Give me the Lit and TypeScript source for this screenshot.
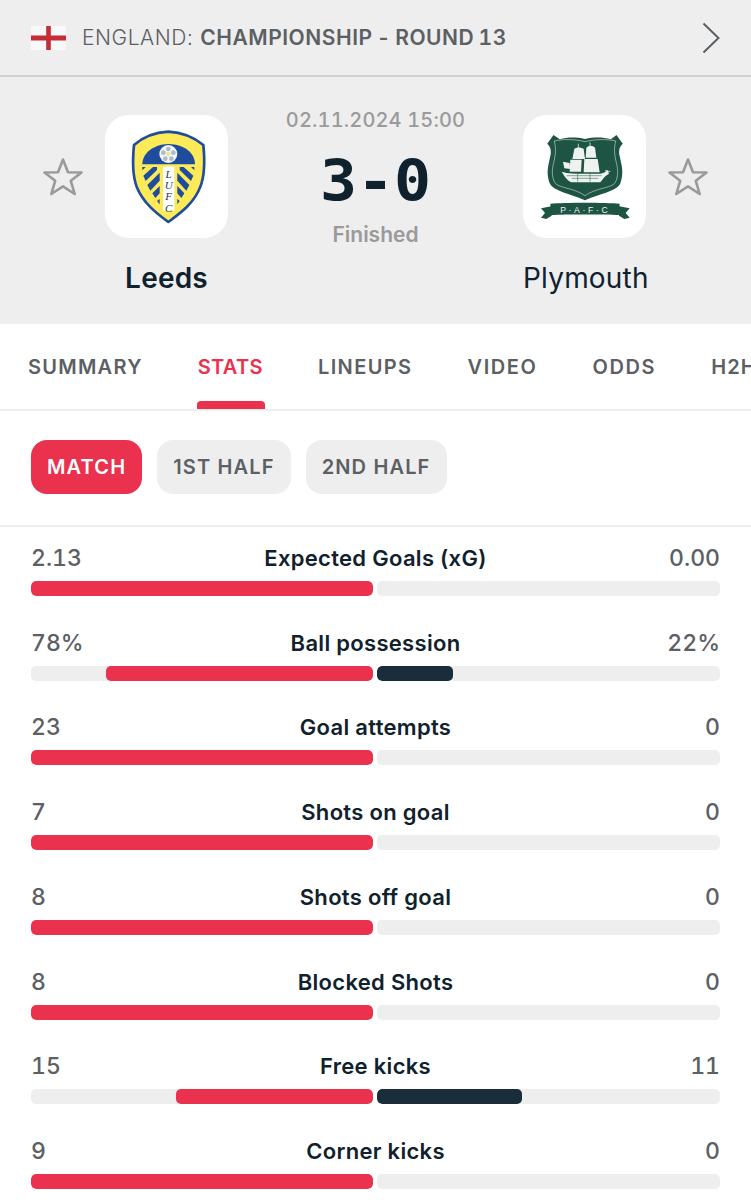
import { LitElement, html, css } from "lit";
import { customElement } from "lit/decorators.js";

const TABS: [string, number][] = [["SUMMARY", 1.25], ["STATS", 0.35], ["LINEUPS", 1.4], ["VIDEO", 1.6], ["ODDS", 1.6], ["H2H", 1.1]];
const PILLS = ["MATCH", "1ST HALF", "2ND HALF"];
type Stat = { l: string; h: string; a: string; hp: number; ap: number };
const STATS: Stat[] = [
  { l: "Expected Goals (xG)", h: "2.13", a: "0.00", hp: 100, ap: 0 },
  { l: "Ball possession", h: "78%", a: "22%", hp: 78, ap: 22 },
  { l: "Goal attempts", h: "23", a: "0", hp: 100, ap: 0 },
  { l: "Shots on goal", h: "7", a: "0", hp: 100, ap: 0 },
  { l: "Shots off goal", h: "8", a: "0", hp: 100, ap: 0 },
  { l: "Blocked Shots", h: "8", a: "0", hp: 100, ap: 0 },
  { l: "Free kicks", h: "15", a: "11", hp: 57.7, ap: 42.3 },
  { l: "Corner kicks", h: "9", a: "0", hp: 100, ap: 0 },
];

const star = html`<svg class="star" viewBox="0 0 40 40" aria-hidden="true">
  <polygon points="20,2.5 25,15.3 38.5,15.5 27.8,23.8 31.7,37 20,29.4 8.3,37 12.2,23.8 1.5,15.5 15,15.3" fill="none" stroke="#9a9a9a" stroke-width="2.6" stroke-linejoin="round"></polygon>
</svg>`;

const leeds = html`<svg class="crest" viewBox="-60 -30 369 369" aria-label="Leeds crest">
  <path d="M130 20C95 22 55 35 27 60C22 110 22 150 35 185C55 235 95 265 130 291C165 265 208 235 226 185C240 150 240 110 235 60C205 35 165 22 130 20Z" fill="#fcea58" stroke="#1f4c9c" stroke-width="8" stroke-linejoin="round"></path>
  <path d="M52 118C52 85 85 58 130 57C180 58 210 85 210 118Z" fill="#1f4c9c"></path>
  <circle cx="130" cy="87" r="27" fill="#f4f6fa"></circle>
  <g fill="#a9bcd6">
    <circle cx="130" cy="72" r="7"></circle><circle cx="145" cy="83" r="7"></circle><circle cx="139" cy="101" r="7"></circle><circle cx="121" cy="101" r="7"></circle><circle cx="115" cy="83" r="7"></circle>
  </g>
  <circle cx="130" cy="87" r="7" fill="#f3e68a"></circle>
  <rect x="114" y="125" width="34" height="132" fill="#fff"></rect>
  <text class="lufc" x="131" y="128">LUFC</text>
  <g fill="#1f4c9c">
    <path d="M55 152L84 126L96 126L96 135L62 168Z"></path>
    <path d="M67 180L104 143V167L76 197Z"></path>
    <path d="M82 205L104 183V205L91 219Z"></path>
    <path d="M205 152L176 126L164 126L164 135L198 168Z"></path>
    <path d="M193 180L157 143V167L184 197Z"></path>
    <path d="M178 205L157 183V205L169 219Z"></path>
    <path d="M96 228L104 222V238Z"></path>
    <path d="M164 228L157 222V238Z"></path>
    <path d="M52 126H62L52 136Z"></path>
    <path d="M208 126H198L208 136Z"></path>
  </g>
</svg>`;

const ply = html`<svg class="crest" viewBox="-36 -30 369 369" aria-label="Plymouth crest">
  <g transform="translate(150 0) scale(1.05 1) translate(-150 0)">
    <path d="M60 30L78 43C100 36 124 36 150 42C176 36 200 36 224 43L240 30L258 56C250 64 246 72 248 88C254 120 262 140 252 172C244 200 196 204 150 226C104 204 58 200 48 172C38 140 46 120 52 88C54 72 50 64 42 56Z" fill="#1d5443"></path>
    <path d="M62 48C85 42 120 42 150 50C180 42 215 42 238 48C232 70 234 90 240 115C246 140 244 165 232 178C215 190 180 190 150 212C120 190 85 190 68 178C56 165 54 140 60 115C66 90 68 70 62 48Z" fill="none" stroke="#e6efe9" stroke-width="1.6"></path>
  </g>
  <g fill="#eef3ef">
    <path d="M118 72C124 66 138 66 146 72L150 102H112Z"></path>
    <path d="M106 104H140L138 140H104Z"></path>
    <path d="M154 68C160 60 174 60 180 68L184 98H152Z"></path>
    <path d="M148 102H188L194 142H146Z"></path>
    <path d="M84 110L104 114L106 132L88 130Z"></path>
    <path d="M80 140C100 146 120 146 145 146H195C205 146 212 140 218 136L222 146C210 152 205 160 196 172H108C96 166 88 154 80 140Z"></path>
  </g>
  <g stroke="#eef3ef" stroke-width="2.2" fill="none">
    <path d="M130 56V72M165 52V68M210 136L226 140"></path>
  </g>
  <g stroke="#1d5443" stroke-width="1.5" fill="none">
    <path d="M95 152H200M110 160H190M128 146V170M165 146V170"></path>
  </g>
  <path d="M46 236C90 232 210 232 254 236L252 270C210 268 90 268 48 270Z" fill="#1d5443"></path>
  <path d="M18 250L50 244V272L34 282L18 278L30 264Z" fill="#1d5443"></path>
  <path d="M284 250L252 244V272L268 282L284 278L272 264Z" fill="#1d5443"></path>
  <text class="pafc" x="151" y="263">P·A·F·C</text>
</svg>`;

@customElement("app-root")
export class AppRoot extends LitElement {
  static styles = css`
    :host { display: block; width: 751px; height: 1200px; overflow: hidden; background: #fff; font-family: Inter, "Liberation Sans", sans-serif; color: #10212e; }
    .lufc { font-family: "Liberation Serif", serif; font-style: italic; font-size: 33px; fill: #26375a; writing-mode: vertical-rl; text-orientation: upright; letter-spacing: -2px; }
    .pafc { font-family: "Liberation Sans", sans-serif; font-size: 26px; fill: #eef3ef; letter-spacing: 8px; text-anchor: middle; }
    .top { height: 75px; background: #eeeeee; border-bottom: 2px solid #cfd1d1; display: flex; align-items: center; padding: 0 31px; }
    .flag { width: 35px; height: 24px; margin-right: 16px; flex: none; }
    .crumb { font-size: 21px; letter-spacing: 0.55px; word-spacing: -2px; font-variant-numeric: tabular-nums; color: #5b6064; display: flex; gap: 7px; white-space: nowrap; }
    .crumb .c { font-weight: 300; }
    .crumb b { font-weight: 600; }
    .chev { width: 20px; height: 32px; margin-left: auto; margin-right: -1px; flex: none; }
    .head { height: 247px; box-sizing: border-box; background: #eeeeee; display: flex; justify-content: space-between; padding: 38px 43px 0; }
    .team { display: grid; grid-template-columns: 40px 123px; column-gap: 22px; grid-template-rows: 123px auto; }
    .team.away { grid-template-columns: 123px 40px; }
    .star { width: 40px; height: 40px; align-self: center; }
    .card { width: 123px; height: 123px; background: #fff; border-radius: 24px; }
    .crest { display: block; width: 123px; height: 123px; }
    .name { font-size: 28px; letter-spacing: 0.2px; line-height: 32px; text-align: center; margin-top: 24px; white-space: nowrap; }
    .home .name { grid-column: 2; font-weight: 600; }
    .away .name { grid-column: 1; font-weight: 400; }
    .mid { display: flex; flex-direction: column; align-items: center; margin-top: -8px; }
    .date { font-size: 20px; line-height: 24px; font-weight: 500; letter-spacing: 0.15px; font-variant-numeric: tabular-nums; color: #9a9a9a; padding-top: 1px; }
    .score { font-family: "DejaVu Sans Mono", monospace; font-weight: 700; font-size: 57px; line-height: 60px; margin-top: 19px; color: #10212e; transform: scaleX(1.08); }
    .fin { font-size: 21px; line-height: 24px; font-weight: 600; color: #9a9a9a; margin-top: 12px; }
    .tabs { height: 87px; box-sizing: border-box; border-bottom: 2px solid #eeeeee; display: flex; gap: 55px; padding: 29px 0 0 28px; overflow: hidden; }
    .tab { position: relative; flex: none; font-size: 20px; line-height: 28px; font-weight: 600; color: #5b6064; }
    .tab.on { color: #ea314e; }
    .tab.on::after { content: ""; position: absolute; left: -1px; right: -2px; top: 48px; height: 8px; border-radius: 4px 4px 0 0; background: #ea314e; }
    .pills { height: 116px; box-sizing: border-box; border-bottom: 2px solid #eeeeee; display: flex; gap: 15px; padding: 29px 0 0 31px; }
    .pill { height: 54px; box-sizing: border-box; padding: 0 16px; border-radius: 16px; background: #eeeeee; color: #5b6064; font-size: 20px; line-height: 54px; font-weight: 600; letter-spacing: 1.15px; white-space: nowrap; }
    .pill.on { background: #ea314e; color: #fff; }
    .stats { padding: 17px 31px 0; }
    .row { height: 84.72px; }
    .vals { display: grid; grid-template-columns: 1fr auto 1fr; align-items: center; height: 28px; margin-bottom: 9px; }
    .v { font-size: 23px; font-weight: 500; color: #5b6064; font-variant-numeric: tabular-nums; }
    .v.r { text-align: right; }
    .lab { font-size: 22px; font-weight: 600; letter-spacing: 0.3px; color: #10212e; white-space: nowrap; }
    .bars { display: flex; gap: 4px; height: 15px; }
    .track { flex: 1; display: flex; background: #eeeeee; border-radius: 5px; overflow: hidden; }
    .track.h { flex: 0 0 342.3px; justify-content: flex-end; }
    .fill { height: 100%; border-radius: 5px; }
    .h .fill { background: #ea314e; }
    .a .fill { background: #1a2d3b; }
  `;

  render() {
    return html`
      <div class="top">
        <svg class="flag" viewBox="0 0 35 24" aria-label="England flag">
          <rect width="35" height="24" fill="#f8f8f8"></rect>
          <rect x="0" y="9.5" width="35" height="5" fill="#c52d36"></rect>
          <rect x="15.2" y="0" width="4.6" height="24" fill="#c52d36"></rect>
        </svg>
        <div class="crumb"><span class="c">ENGLAND:</span><b>CHAMPIONSHIP - ROUND 13</b></div>
        <svg class="chev" viewBox="0 0 20 32" aria-hidden="true">
          <path d="M2.5 1.5L17.5 16L2.5 30.5" fill="none" stroke="#5b6064" stroke-width="2"></path>
        </svg>
      </div>
      <div class="head">
        <div class="team home">
          ${star}
          <div class="card">${leeds}</div>
          <div class="name">Leeds</div>
        </div>
        <div class="mid">
          <div class="date">02.11.2024 15:00</div>
          <div class="score">3-0</div>
          <div class="fin">Finished</div>
        </div>
        <div class="team away">
          <div class="card">${ply}</div>
          ${star}
          <div class="name">Plymouth</div>
        </div>
      </div>
      <div class="tabs">
        ${TABS.map(([t, ls]) => html`<div class="tab ${t === "STATS" ? "on" : ""}" style="letter-spacing:${ls}px">${t}</div>`)}
      </div>
      <div class="pills">
        ${PILLS.map((p, i) => html`<div class="pill ${i === 0 ? "on" : ""}">${p}</div>`)}
      </div>
      <div class="stats">
        ${STATS.map(
          (s) => html`<div class="row">
            <div class="vals">
              <div class="v">${s.h}</div>
              <div class="lab">${s.l}</div>
              <div class="v r">${s.a}</div>
            </div>
            <div class="bars">
              <div class="track h"><div class="fill" style="width:${s.hp}%"></div></div>
              <div class="track a"><div class="fill" style="width:${s.ap}%"></div></div>
            </div>
          </div>`
        )}
      </div>
    `;
  }
}
